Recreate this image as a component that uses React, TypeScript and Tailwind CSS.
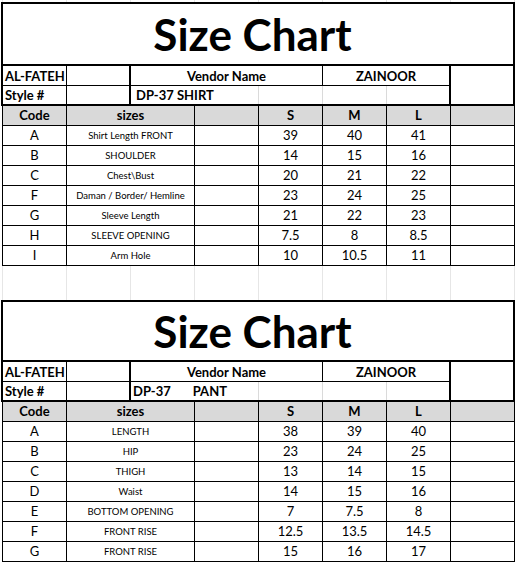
type Row = { code: string; label: string; s: string; m: string; l: string };

const shirtRows: Row[] = [
  { code: 'A', label: 'Shirt Length FRONT', s: '39', m: '40', l: '41' },
  { code: 'B', label: 'SHOULDER', s: '14', m: '15', l: '16' },
  { code: 'C', label: 'Chest\\Bust', s: '20', m: '21', l: '22' },
  { code: 'F', label: 'Daman / Border/ Hemline', s: '23', m: '24', l: '25' },
  { code: 'G', label: 'Sleeve Length', s: '21', m: '22', l: '23' },
  { code: 'H', label: 'SLEEVE OPENING', s: '7.5', m: '8', l: '8.5' },
  { code: 'I', label: 'Arm Hole', s: '10', m: '10.5', l: '11' },
];

const pantRows: Row[] = [
  { code: 'A', label: 'LENGTH', s: '38', m: '39', l: '40' },
  { code: 'B', label: 'HIP', s: '23', m: '24', l: '25' },
  { code: 'C', label: 'THIGH', s: '13', m: '14', l: '15' },
  { code: 'D', label: 'Waist', s: '14', m: '15', l: '16' },
  { code: 'E', label: 'BOTTOM OPENING', s: '7', m: '7.5', l: '8' },
  { code: 'F', label: 'FRONT RISE', s: '12.5', m: '13.5', l: '14.5' },
  { code: 'G', label: 'FRONT RISE', s: '15', m: '16', l: '17' },
];

// empty sheet cells between / around the charts
function GridStrip({ height }: { height: string }) {
  return (
    <div className={`flex ml-[2px] border-l border-[#e6e6e6] ${height}`}>
      {Array.from({ length: 8 }).map((_, i) => (
        <div key={i} className="w-[64px] border-r border-[#e6e6e6]" />
      ))}
    </div>
  );
}

interface SizeChartProps {
  titleHeight: string;
  styleNo: React.ReactNode;
  rows: Row[];
}

function SizeChart({ titleHeight, styleNo, rows }: SizeChartProps) {
  return (
    <div>
      {/* Title */}
      <div
        className={`ml-px w-[514px] border-2 border-black flex items-center justify-center pr-[11px] ${titleHeight}`}
      >
        <h1 className="text-[44px] font-bold leading-none">Size Chart</h1>
      </div>

      {/* Vendor / style */}
      <div className="ml-px w-[514px] h-[40px] flex border-x-2 border-b-2 border-black text-[13px] font-bold leading-none">
        <div className="w-[64px] flex flex-col border-r border-black">
          <div className="h-[20px] flex items-center pl-[2px] pt-px border-b border-black">AL-FATEH</div>
          <div className="flex-1 flex items-center pl-[2px] pt-px">Style #</div>
        </div>
        <div className="w-[64px] flex flex-col border-r-2 border-black">
          <div className="h-[20px] border-b border-black" />
          <div className="flex-1" />
        </div>
        <div className="w-[320px] flex flex-col border-r-2 border-black">
          <div className="h-[20px] flex border-b border-black">
            <div className="w-[192px] flex items-center justify-center pt-px border-r border-black">Vendor Name</div>
            <div className="flex-1 flex items-center justify-center pt-px">ZAINOOR</div>
          </div>
          <div className="flex-1 flex">
            <div className="w-[128px] flex items-center pt-px border-r border-[#dadada] whitespace-nowrap">{styleNo}</div>
            <div className="w-[64px] border-r border-[#dadada]" />
            <div className="w-[64px] border-r border-[#dadada]" />
            <div className="flex-1" />
          </div>
        </div>
        <div className="flex-1" />
      </div>

      {/* Measurements */}
      <div className="ml-[2px] w-[513px] text-[13px] leading-none">
        <div className="h-[20px] flex bg-[#d9d9d9] border-l border-b border-black font-bold">
          <div className="w-[64px] flex items-center justify-center border-r border-black">Code</div>
          <div className="w-[128px] flex items-center justify-center border-r border-black">sizes</div>
          <div className="w-[64px] border-r border-black" />
          <div className="w-[64px] flex items-center justify-center border-r border-black">S</div>
          <div className="w-[64px] flex items-center justify-center border-r border-black">M</div>
          <div className="w-[64px] flex items-center justify-center border-r border-black">L</div>
          <div className="w-[64px] border-r border-black" />
        </div>
        {rows.map((row, i) => (
          <div key={i} className="h-[20px] flex border-l border-b border-black">
            <div className="w-[64px] flex items-center justify-center border-r border-black">{row.code}</div>
            <div className="w-[128px] flex items-center justify-center border-r border-black text-[9.5px] whitespace-nowrap">
              {row.label}
            </div>
            <div className="w-[64px] border-r border-black" />
            <div className="w-[64px] flex items-center justify-center border-r border-black">{row.s}</div>
            <div className="w-[64px] flex items-center justify-center border-r border-black">{row.m}</div>
            <div className="w-[64px] flex items-center justify-center border-r border-black">{row.l}</div>
            <div className="w-[64px] border-r border-black" />
          </div>
        ))}
      </div>
    </div>
  );
}

export default function App() {
  return (
    <div className="w-[519px] h-[566px] bg-white overflow-hidden text-black font-[Lato,sans-serif]">
      <GridStrip height="h-[2px]" />
      <SizeChart
        titleHeight="h-[64px]"
        styleNo={<span className="pl-[5px]">DP-37 SHIRT</span>}
        rows={shirtRows}
      />
      <GridStrip height="h-[34px]" />
      <SizeChart
        titleHeight="h-[62px]"
        styleNo={
          <span className="pl-[2px]">
            DP-37<span className="ml-[22px]">PANT</span>
          </span>
        }
        rows={pantRows}
      />
    </div>
  );
}
